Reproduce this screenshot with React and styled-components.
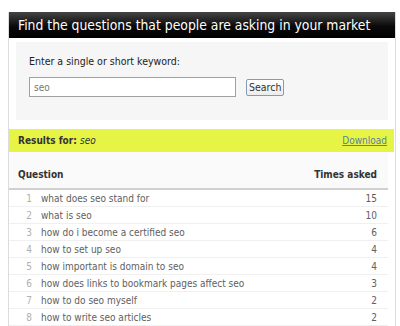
import React from 'react'
import styled, { createGlobalStyle } from 'styled-components'

const GlobalStyle = createGlobalStyle`
  body {
    margin: 0;
    background: #fff;
    font-family: "DejaVu Sans Condensed", "DejaVu Sans", Verdana, sans-serif;
  }
`

const Box = styled.div`
  margin: 12px 0 0 8px;
  width: 386px;
  height: 314px;
  border-left: 1px solid #dcdcdc;
  border-right: 1px solid #dcdcdc;
  overflow: hidden;
`

const Header = styled.h1`
  margin: 0;
  height: 26px;
  line-height: 26px;
  padding-left: 9px;
  background: linear-gradient(#454545, #0a0a0a 55%, #000);
  color: #fff;
  font-size: 13.8px;
  font-weight: normal;
  white-space: nowrap;
`

const SearchPanel = styled.div`
  margin: 4px 7px 0;
  height: 78px;
  background: #f6f6f6;
  padding: 13px 13px 0;
  box-sizing: border-box;
`

const Label = styled.div`
  font-size: 10.5px;
  color: #222;
  margin-bottom: 10px;
`

const Row = styled.div`
  display: flex;
  align-items: center;
  gap: 10px;
`

const Input = styled.input`
  width: 207px;
  height: 20px;
  box-sizing: border-box;
  border: 1px solid #a0a0a0;
  padding: 0 4px;
  font-size: 10px;
  font-family: inherit;
  color: #777;
  background: #fff;
`

const Button = styled.button`
  height: 17px;
  padding: 0 2px;
  font-size: 10.5px;
  font-family: inherit;
  color: #333;
  border: 1px solid #7f9db9;
  border-radius: 2px;
  background: linear-gradient(#fff, #ececec);
`

const ResultsBar = styled.div`
  margin-top: 9px;
  height: 23px;
  width: 385px;
  background: #e6f545;
  display: flex;
  align-items: center;
  justify-content: space-between;
  padding: 0 7px 0 9px;
  box-sizing: border-box;
  font-size: 10px;
`

const ResultsLabel = styled.span`
  font-weight: bold;
  color: #333;
  em {
    font-weight: normal;
    font-style: italic;
  }
`

const Link = styled.a`
  color: #5a7f9e;
  text-decoration: underline;
`

const TableWrap = styled.div`
  background: #fafafa;
  margin-right: 7px;
`

const Table = styled.table`
  width: 100%;
  border-collapse: collapse;
  font-size: 10px;
`

const Th = styled.th`
  text-align: ${p => (p.right ? 'right' : 'left')};
  font-weight: bold;
  color: #333;
  padding: 17px ${p => (p.right ? 11 : 0)}px 8px ${p => (p.right ? 0 : 9)}px;
  border-bottom: 2px solid #d0d0d0;
`

const Td = styled.td`
  height: 16px;
  padding: 0 ${p => (p.count ? '11px' : p.num ? '1px' : 0)} 0 ${p => (p.text ? '8px' : 0)};
  color: ${p => (p.num ? '#b0b0b0' : '#606060')};
  text-align: ${p => (p.num || p.count ? 'right' : 'left')};
  width: ${p => (p.num ? '23px' : 'auto')};
  border-bottom: 1px solid #f0f0f0;
  background: #fff;
`

const rows = [
  ['what does seo stand for', 15],
  ['what is seo', 10],
  ['how do i become a certified seo', 6],
  ['how to set up seo', 4],
  ['how important is domain to seo', 4],
  ['how does links to bookmark pages affect seo', 3],
  ['how to do seo myself', 2],
  ['how to write seo articles', 2]
]

export default function App () {
  return (
    <>
      <GlobalStyle />
      <Box>
        <Header>Find the questions that people are asking in your market</Header>
        <SearchPanel>
          <Label>Enter a single or short keyword:</Label>
          <Row>
            <Input defaultValue='seo' />
            <Button>Search</Button>
          </Row>
        </SearchPanel>
        <ResultsBar>
          <ResultsLabel>Results for: <em>seo</em></ResultsLabel>
          <Link href='#'>Download</Link>
        </ResultsBar>
        <TableWrap>
          <Table>
            <thead>
              <tr>
                <Th colSpan={2}>Question</Th>
                <Th right>Times asked</Th>
              </tr>
            </thead>
            <tbody>
              {rows.map((r, i) => (
                <tr key={i}>
                  <Td num>{i + 1}</Td>
                  <Td text>{r[0]}</Td>
                  <Td count>{r[1]}</Td>
                </tr>
              ))}
            </tbody>
          </Table>
        </TableWrap>
      </Box>
    </>
  )
}
